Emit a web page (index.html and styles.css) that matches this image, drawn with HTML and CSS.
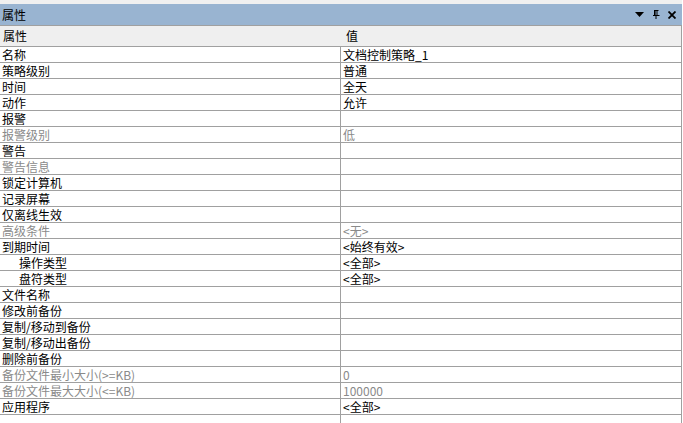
FILE: index.html
```html
<!DOCTYPE html>
<html lang="zh">
<head>
<meta charset="utf-8">
<title>属性</title>
<link rel="stylesheet" href="styles.css">
</head>
<body>
<div class="panel">
  <div class="titlebar">
    <span class="title">属性</span>
    <div class="tools">
      <svg class="ico" width="9" height="6" viewBox="0 0 9 6"><path d="M0 0H9L4.5 5Z" fill="#000"/></svg>
      <svg class="ico" width="8" height="9" viewBox="0 0 8 9"><path d="M2 0.5H6.5M2.5 0.5V5M5 0.5V5M1 5.5H7.5M4 5.5V9" stroke="#000" stroke-width="1" fill="none"/><rect x="2" y="0" width="1.6" height="5.5" fill="#000"/></svg>
      <svg class="ico" width="8" height="8" viewBox="0 0 8 8"><path d="M0.5 0.5L7.5 7.5M7.5 0.5L0.5 7.5" stroke="#000" stroke-width="1.8" fill="none"/></svg>
    </div>
  </div>
  <div class="grid">
    <div class="head">属性</div><div class="head val">值</div>
    <div class="k">名称</div><div class="v">文档控制策略_1</div>
    <div class="k">策略级别</div><div class="v">普通</div>
    <div class="k">时间</div><div class="v">全天</div>
    <div class="k">动作</div><div class="v">允许</div>
    <div class="k">报警</div><div class="v"></div>
    <div class="k dis">报警级别</div><div class="v dis">低</div>
    <div class="k">警告</div><div class="v"></div>
    <div class="k dis">警告信息</div><div class="v"></div>
    <div class="k">锁定计算机</div><div class="v"></div>
    <div class="k">记录屏幕</div><div class="v"></div>
    <div class="k">仅离线生效</div><div class="v"></div>
    <div class="k dis">高级条件</div><div class="v dis">&lt;无&gt;</div>
    <div class="k">到期时间</div><div class="v">&lt;始终有效&gt;</div>
    <div class="k sub">操作类型</div><div class="v">&lt;全部&gt;</div>
    <div class="k sub">盘符类型</div><div class="v">&lt;全部&gt;</div>
    <div class="k">文件名称</div><div class="v"></div>
    <div class="k">修改前备份</div><div class="v"></div>
    <div class="k">复制/移动到备份</div><div class="v"></div>
    <div class="k">复制/移动出备份</div><div class="v"></div>
    <div class="k">删除前备份</div><div class="v"></div>
    <div class="k dis">备份文件最小大小(&gt;=KB)</div><div class="v dis">0</div>
    <div class="k dis">备份文件最大大小(&lt;=KB)</div><div class="v dis">100000</div>
    <div class="k">应用程序</div><div class="v">&lt;全部&gt;</div>
    <div class="k empty"></div><div class="v empty"></div>
  </div>
</div>
</body>
</html>
```
FILE: styles.css
```css
html, body {
  margin: 0;
  padding: 0;
  background: #ffffff;
  width: 683px;
  height: 423px;
  overflow: hidden;
}
body {
  font-family: "Noto Sans CJK SC", "Liberation Sans", sans-serif;
  font-size: 12px;
  color: #000;
}
.panel {
  width: 682px;
  padding-top: 4px;
  background: #f0f0f0;
}
.titlebar {
  height: 21px;
  background: #99b4d1;
  border-bottom: 1px solid #a0a0a0;
  display: flex;
  align-items: center;
  justify-content: space-between;
  padding: 0 6px 0 2px;
}
.title {
  font-size: 12px;
  line-height: 21px;
}
.tools {
  display: flex;
  align-items: center;
  gap: 8px;
}
.ico {
  display: block;
}
.grid {
  display: grid;
  grid-template-columns: 341px 341px;
  background: #ffffff;
}
.head {
  height: 20px;
  line-height: 20px;
  background: #efefef;
  border-bottom: 1px solid #a0a0a0;
  padding-left: 3px;
}
.head.val {
  padding-left: 5px;
  border-right: 1px solid #a0a0a0;
}
.k, .v {
  height: 15px;
  line-height: 15px;
  border-bottom: 1px solid #a0a0a0;
  white-space: nowrap;
  overflow: hidden;
}
.k {
  border-right: 1px solid #a0a0a0;
  padding-left: 2px;
}
.v {
  padding-left: 2px;
  border-right: 1px solid #a0a0a0;
}
.sub {
  padding-left: 19px;
}
.dis {
  color: #8a8a8a;
}
.empty {
  border-bottom: none;
  height: 20px;
}
```
